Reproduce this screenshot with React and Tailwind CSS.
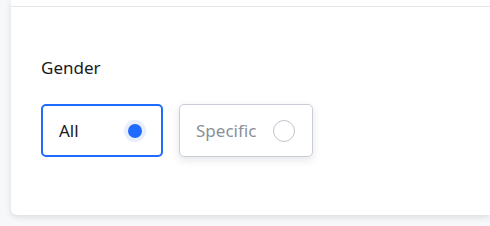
export default function App() {
  return (
    <div className="min-h-[226px] w-[490px] overflow-hidden bg-[#f7f8fa] pl-[11px]" style={{ fontFamily: '"Noto Sans", "Open Sans", sans-serif' }}>
      <div className="rounded-bl-md bg-white shadow-[0_2px_6px_rgba(0,0,0,0.12)]">
        <div className="h-[7px] border-b border-[#e4e6ea]" />
        <div className="pl-[30px] pt-[49px] pb-[58px]">
          <div className="text-[17px] leading-6 text-[#1a1a1a]">Gender</div>
          <div className="mt-6 flex gap-4">
            <button className="flex h-[53px] w-[122px] items-center justify-between rounded-[5px] border-2 border-[#1f6bff] bg-white pl-4 pr-[15px] text-[17px] text-[#1a1a1a]">
              <span>All</span>
              <span className="flex h-[22px] w-[22px] items-center justify-center rounded-full bg-[#e8eefc]">
                <span className="h-[14px] w-[14px] rounded-full bg-[#1f6bff]" />
              </span>
            </button>
            <button className="flex h-[53px] w-[134px] items-center justify-between rounded-[5px] border border-[#c9cdd6] bg-white pl-4 pr-[17px] text-[17px] text-[#8a8f99] shadow-[0_3px_8px_rgba(30,40,80,0.12)]">
              <span>Specific</span>
              <span className="h-[22px] w-[22px] rounded-full border border-[#c0c4cc] bg-white" />
            </button>
          </div>
        </div>
      </div>
    </div>
  );
}
